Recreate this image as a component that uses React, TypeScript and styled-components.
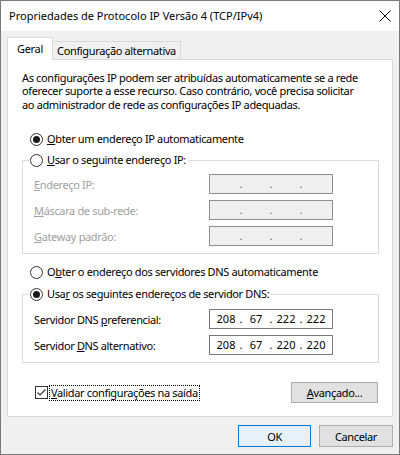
import React from 'react';
import styled, { createGlobalStyle } from 'styled-components';

const GlobalStyle = createGlobalStyle`
  html, body {
    margin: 0;
    padding: 0;
    background: #f0f0f0;
  }
  body {
    font-family: 'Noto Sans', 'Segoe UI', sans-serif;
    font-size: 11px;
    letter-spacing: -0.35px;
    color: #000;
  }
  * {
    box-sizing: border-box;
  }
`;

const Window = styled.div`
  width: 400px;
  height: 455px;
  border: 1px solid #7a7a7a;
  background: #f0f0f0;
  display: flex;
  flex-direction: column;
`;

const TitleBar = styled.div`
  height: 30px;
  background: #fff;
  display: flex;
  align-items: center;
  justify-content: space-between;
  padding: 0 8px 0 8px;
`;

const Title = styled.span`
  font-size: 11px;
  letter-spacing: 0;
  line-height: 16px;
`;

const CloseButton = styled.div`
  width: 12px;
  height: 12px;
  display: flex;
`;

const Body = styled.div`
  padding: 6px 6px 0 6px;
  display: flex;
  flex-direction: column;
`;

const TabRow = styled.div`
  display: flex;
  align-items: flex-end;
  height: 22px;
`;

const Tab = styled.div<{ $active?: boolean }>`
  display: flex;
  align-items: center;
  justify-content: center;
  position: relative;
  white-space: nowrap;
  line-height: 16px;
  border: 1px solid #d9d9d9;
  border-bottom: none;
  ${(p) =>
    p.$active
      ? `
    width: 46px;
    height: 23px;
    background: #fff;
    margin-bottom: -1px;
    z-index: 1;
  `
      : `
    width: 128px;
    height: 18px;
    background: #f0f0f0;
    border-left: none;
  `}
`;

const Panel = styled.div`
  height: 358px;
  background: #fff;
  border: 1px solid #d9d9d9;
  padding: 10.5px 13px 0 14px;
  display: flex;
  flex-direction: column;
`;

const Intro = styled.p`
  margin: 0;
  width: 345px;
  line-height: 13.5px;
`;

const OptionRow = styled.div<{ $top: number }>`
  display: flex;
  align-items: center;
  height: 16px;
  margin-top: ${(p) => p.$top}px;
  margin-left: 8px;
  line-height: 16px;
`;

const RadioCircle = styled.span<{ $checked?: boolean }>`
  width: 13px;
  height: 13px;
  border-radius: 50%;
  border: 1px solid #333;
  background: #fff;
  display: flex;
  align-items: center;
  justify-content: center;
  margin-right: 4px;
  flex: none;
  &::after {
    content: '';
    display: ${(p) => (p.$checked ? 'block' : 'none')};
    width: 7px;
    height: 7px;
    border-radius: 50%;
    background: #1a1a1a;
  }
`;

const GroupBox = styled.fieldset<{ $top: number; $inner: number }>`
  margin: ${(p) => p.$top}px 0 0 0;
  padding: ${(p) => p.$inner}px 0 7px 0;
  border: 1px solid #dcdcdc;
  min-inline-size: 0;
  display: flex;
  flex-direction: column;
  gap: 6px;
`;

const Legend = styled.legend`
  padding: 0 2px 0 1px;
  margin-left: 6px;
  display: flex;
  align-items: center;
  height: 16px;
  line-height: 16px;
  background: #fff;
`;

const FieldRow = styled.div`
  display: flex;
  align-items: center;
  height: 20px;
  padding-left: 11px;
`;

const FieldLabel = styled.span<{ $disabled?: boolean }>`
  width: 175px;
  color: ${(p) => (p.$disabled ? '#a0a0a0' : '#000')};
`;

const IpBox = styled.div<{ $disabled?: boolean }>`
  width: 124px;
  height: 20px;
  border: 1px solid ${(p) => (p.$disabled ? '#8f8f8f' : '#7a7a7a')};
  background: ${(p) => (p.$disabled ? '#f0f0f0' : '#fff')};
  display: flex;
  align-items: center;
  padding-left: 4px;
  color: ${(p) => (p.$disabled ? '#6d6d6d' : '#000')};
  letter-spacing: 0;
  line-height: 16px;
`;

const IpPart = styled.span`
  width: 24px;
  text-align: center;
`;

const IpDot = styled.span`
  width: 6px;
  text-align: center;
`;

const BottomRow = styled.div`
  display: flex;
  align-items: center;
  justify-content: space-between;
  margin-top: 19px;
  margin-left: 13px;
  margin-right: 1px;
`;

const CheckLabel = styled.label`
  display: flex;
  align-items: center;
`;

const CheckBoxGlyph = styled.span`
  width: 13px;
  height: 13px;
  border: 1px solid #333;
  background: #fff;
  display: flex;
  margin-right: 1px;
`;

const FocusText = styled.span`
  border: 1px dotted #000;
  padding: 0 1px;
  line-height: 14px;
`;

const Button = styled.button<{ $default?: boolean; $w: number }>`
  width: ${(p) => p.$w}px;
  height: ${(p) => (p.$default !== undefined ? 22 : 21)}px;
  font-family: inherit;
  font-size: 11px;
  letter-spacing: inherit;
  color: #000;
  padding: 0;
  border: 1px solid ${(p) => (p.$default ? '#0078d7' : '#adadad')};
  background: ${(p) => (p.$default ? '#e5f1fb' : '#e1e1e1')};
`;

const Footer = styled.div`
  display: flex;
  justify-content: flex-end;
  gap: 8px;
  margin-top: 8px;
`;

function Radio({ checked, children, top }: { checked?: boolean; children: React.ReactNode; top: number }) {
  return (
    <OptionRow $top={top}>
      <RadioCircle $checked={checked} />
      <span>{children}</span>
    </OptionRow>
  );
}

function IpField({ value, disabled }: { value?: string[]; disabled?: boolean }) {
  const parts = value || ['', '', '', ''];
  return (
    <IpBox $disabled={disabled}>
      {parts.map((part, i) => (
        <React.Fragment key={i}>
          <IpPart>{part}</IpPart>
          {i < 3 && <IpDot>.</IpDot>}
        </React.Fragment>
      ))}
    </IpBox>
  );
}

export default function App() {
  return (
    <>
      <GlobalStyle />
      <Window>
        <TitleBar>
          <Title>Propriedades de Protocolo IP Versão 4 (TCP/IPv4)</Title>
          <CloseButton>
            <svg width="12" height="12" viewBox="0 0 12 12">
              <path d="M0.5 0.5 L11.5 11.5 M11.5 0.5 L0.5 11.5" stroke="#000" strokeWidth="1" fill="none" />
            </svg>
          </CloseButton>
        </TitleBar>
        <Body>
          <TabRow>
            <Tab $active>Geral</Tab>
            <Tab>Configuração alternativa</Tab>
          </TabRow>
          <Panel>
            <Intro>
              As configurações IP podem ser atribuídas automaticamente se a rede oferecer suporte a esse recurso. Caso
              contrário, você precisa solicitar ao administrador de rede as configurações IP adequadas.
            </Intro>

            <Radio checked top={20}>
              <u>O</u>bter um endereço IP automaticamente
            </Radio>

            <GroupBox $top={5} $inner={6}>
              <Legend>
                <RadioCircle />
                <span>
                  <u>U</u>sar o seguinte endereço IP:
                </span>
              </Legend>
              <FieldRow>
                <FieldLabel $disabled>
                  <u>E</u>ndereço IP:
                </FieldLabel>
                <IpField disabled />
              </FieldRow>
              <FieldRow>
                <FieldLabel $disabled>
                  <u>M</u>áscara de sub-rede:
                </FieldLabel>
                <IpField disabled />
              </FieldRow>
              <FieldRow>
                <FieldLabel $disabled>
                  <u>G</u>ateway padrão:
                </FieldLabel>
                <IpField disabled />
              </FieldRow>
            </GroupBox>

            <Radio top={10}>
              O<u>b</u>ter o endereço dos servidores DNS automaticamente
            </Radio>

            <GroupBox $top={6} $inner={7}>
              <Legend>
                <RadioCircle $checked />
                <span>
                  Usa<u>r</u> os seguintes endereços de servidor DNS:
                </span>
              </Legend>
              <FieldRow>
                <FieldLabel>
                  Servidor DNS <u>p</u>referencial:
                </FieldLabel>
                <IpField value={['208', '67', '222', '222']} />
              </FieldRow>
              <FieldRow>
                <FieldLabel>
                  Servidor <u>D</u>NS alternativo:
                </FieldLabel>
                <IpField value={['208', '67', '220', '220']} />
              </FieldRow>
            </GroupBox>

            <BottomRow>
              <CheckLabel>
                <CheckBoxGlyph>
                  <svg width="11" height="11" viewBox="0 0 11 11">
                    <path d="M1.5 5.5 L4 8 L9.5 2.5" stroke="#333" strokeWidth="1.2" fill="none" />
                  </svg>
                </CheckBoxGlyph>
                <FocusText>
                  <u>V</u>alidar configurações na saída
                </FocusText>
              </CheckLabel>
              <Button $w={87}>
                <u>A</u>vançado...
              </Button>
            </BottomRow>
          </Panel>
          <Footer>
            <Button $default $w={73}>
              OK
            </Button>
            <Button $default={false} $w={74}>
              Cancelar
            </Button>
          </Footer>
        </Body>
      </Window>
    </>
  );
}
